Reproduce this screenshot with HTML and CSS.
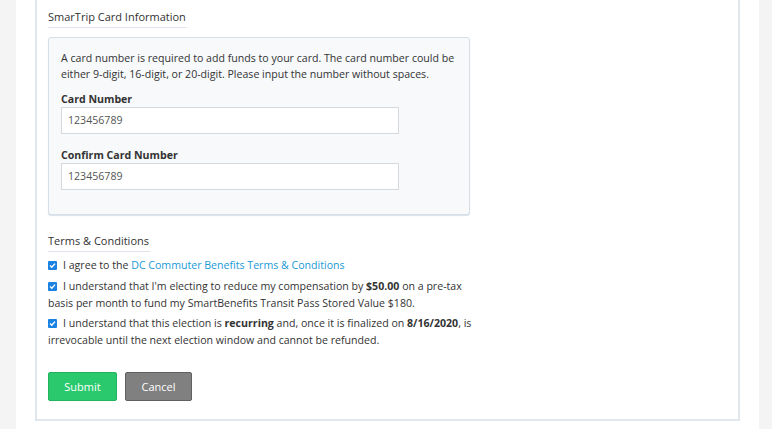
FILE: index.html
```html
<!DOCTYPE html>
<html>
<head>
<meta charset="utf-8">
<link rel="stylesheet" href="styles.css">
</head>
<body>
<div class="page">
  <div class="panel">
    <div class="section-head"><span class="section-title">SmarTrip Card Information</span></div>
    <div class="info-box">
      <p class="info-text">A card number is required to add funds to your card. The card number could be either 9-digit, 16-digit, or 20-digit. Please input the number without spaces.</p>
      <div class="field">
        <label class="field-label">Card Number</label>
        <div class="input">123456789</div>
      </div>
      <div class="field">
        <label class="field-label">Confirm Card Number</label>
        <div class="input">123456789</div>
      </div>
    </div>

    <div class="section-head terms-head"><span class="section-title">Terms &amp; Conditions</span></div>
    <div class="check-row"><span class="check"><svg viewBox="0 0 9 9" width="9" height="9"><path d="M2 4.6 L3.8 6.3 L7 2.6" fill="none" stroke="#fff" stroke-width="1.4"/></svg></span>I agree to the <a class="link">DC Commuter Benefits Terms &amp; Conditions</a></div>
    <div class="check-row"><span class="check"><svg viewBox="0 0 9 9" width="9" height="9"><path d="M2 4.6 L3.8 6.3 L7 2.6" fill="none" stroke="#fff" stroke-width="1.4"/></svg></span>I understand that I'm electing to reduce my compensation by <b>$50.00</b> on a pre-tax basis per month to fund my SmartBenefits Transit Pass Stored Value $180.</div>
    <div class="check-row"><span class="check"><svg viewBox="0 0 9 9" width="9" height="9"><path d="M2 4.6 L3.8 6.3 L7 2.6" fill="none" stroke="#fff" stroke-width="1.4"/></svg></span>I understand that this election is <b>recurring</b> and, once it is finalized on <b>8/16/2020</b>, is irrevocable until the next election window and cannot be refunded.</div>

    <div class="actions">
      <button class="btn btn-submit">Submit</button>
      <button class="btn btn-cancel">Cancel</button>
    </div>
  </div>
</div>
</body>
</html>
```

FILE: styles.css
```css
html, body {
  margin: 0;
  padding: 0;
}
body {
  background: #f4f4f4;
  font-family: "Open Sans", "Liberation Sans", sans-serif;
  font-size: 10.6px;
  color: #333;
  height: 429px;
  overflow: hidden;
}
.page {
  margin-left: 16px;
  width: 743px;
  height: 429px;
  background: #fff;
  padding-left: 19px;
  box-sizing: border-box;
}
.panel {
  width: 705px;
  box-sizing: border-box;
  border: 2px solid #dfe6ec;
  border-top: none;
  background: #fff;
  padding: 8px 12px 18px 11px;
}
.section-head {
  line-height: 18px;
}
.section-title {
  display: inline-block;
  font-size: 11px;
  border-bottom: 1px solid #dde3e8;
  padding-bottom: 1px;
  padding-right: 1px;
}
.info-box {
  margin-top: 9px;
  width: 422px;
  box-sizing: border-box;
  background: #f7f9fb;
  border: 1px solid #d6dfe8;
  border-radius: 3px;
  box-shadow: 0 1px 1px #d9e2ea;
  padding: 12px 12px 24px 12px;
}
.info-text {
  margin: 0;
  line-height: 16px;
}
.field {
  margin-top: 9px;
}
.field + .field {
  margin-top: 13px;
}
.field-label {
  display: block;
  font-weight: bold;
  line-height: 16px;
}
.input {
  width: 338px;
  height: 27px;
  box-sizing: border-box;
  border: 1px solid #d5d9dd;
  background: #fff;
  padding: 0 6px;
  line-height: 25px;
  color: #555;
}
.terms-head {
  margin-top: 17px;
}
.check-row {
  line-height: 17px;
  margin-top: 3.5px;
  width: 426px;
}
.terms-head + .check-row {
  margin-top: 5px;
}
.check {
  display: inline-block;
  width: 9px;
  height: 9px;
  background: #1a82e2;
  border-radius: 1px;
  vertical-align: -1px;
  margin-right: 6px;
}
.check svg {
  display: block;
}
.link {
  color: #1a9ad6;
  text-decoration: none;
}
b {
  font-weight: bold;
}
.actions {
  display: flex;
  gap: 8px;
  margin-top: 22.5px;
}
.btn {
  font-family: "Open Sans", "Liberation Sans", sans-serif;
  font-size: 11px;
  color: #fff;
  height: 29px;
  border-radius: 2px;
  padding: 0;
  cursor: pointer;
}
.btn-submit {
  width: 69px;
  background: #2ac96d;
  border: 1px solid #22b35f;
}
.btn-cancel {
  width: 67px;
  background: #808080;
  border: 1px solid #606060;
}
```
